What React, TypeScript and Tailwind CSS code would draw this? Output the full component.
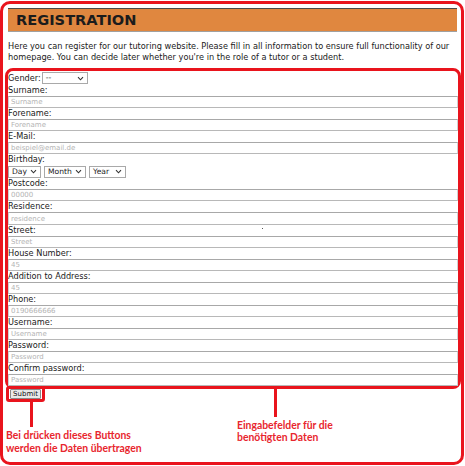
import React from "react";

function Chev() {
  return (
    <svg width="7" height="5" viewBox="0 0 7 5" className="shrink-0">
      <path d="M1 1.2 L3.5 3.8 L6 1.2" fill="none" stroke="#333" strokeWidth="1.1" />
    </svg>
  );
}

function Sel({ label, cls }: { label: string; cls: string }) {
  return (
    <div
      className={`flex items-center justify-between h-[12px] border border-[#a9a9a9] bg-white pl-[3px] pr-[3px] text-[7.6px] leading-none text-[#222] ${cls}`}
    >
      <span>{label}</span>
      <Chev />
    </div>
  );
}

function Field({ label, ph }: { label: string; ph: string }) {
  return (
    <div className="flex flex-col">
      <div className="h-[11px] leading-[11px] text-[8.2px] text-[#1a1a1a]">{label}</div>
      <input
        placeholder={ph}
        className="block w-full h-[12.1px] border-t border-b border-l border-r border-t-[#a8a8a8] border-b-[#b8b8b8] border-l-[#d0d0d0] border-r-[#d0d0d0] bg-white px-[2px] text-[7px] leading-none outline-none placeholder:text-[#b4b4b4] font-['DejaVu_Sans',sans-serif]"
      />
    </div>
  );
}

const before: [string, string][] = [
  ["Surname:", "Surname"],
  ["Forename:", "Forename"],
  ["E-Mail:", "beispiel@email.de"],
];

const after: [string, string][] = [
  ["Postcode:", "00000"],
  ["Residence:", "residence"],
  ["Street:", "Street"],
  ["House Number:", "45"],
  ["Addition to Address:", "45"],
  ["Phone:", "0190666666"],
  ["Username:", "Username"],
  ["Password:", "Password"],
  ["Confirm password:", "Password"],
];

export default function App() {
  return (
    <div className="w-[465px] h-[466px] bg-white overflow-hidden font-['DejaVu_Sans',Verdana,sans-serif]">
      <div className="mt-[1px] w-[464px] h-[464px] border-[3px] border-[#e9141d] rounded-[10px] relative">
        {/* header */}
        <div className="mt-[4px] ml-[5px] mr-[4px] h-[24px] border-t border-t-[#4a4a4a] border-b border-b-[#a0a0a0] bg-[#e0873f] flex items-center pl-[8px]">
          <span className="text-[14.6px] font-bold text-[#1c1c1c] leading-none">REGISTRATION</span>
        </div>
        {/* paragraph */}
        <p className="mt-[9px] ml-[5px] mr-[3px] text-[8.2px] leading-[10.7px] text-[#1a1a1a]">
          Here you can register for our tutoring website. Please fill in all information to ensure full functionality of our homepage. You can decide later whether you're in the role of a tutor or a student.
        </p>
        {/* form box */}
        <div className="mt-[6px] ml-[2px] border-[3px] border-[#e9141d] rounded-[8px] flex flex-col">
          <div className="h-[13.5px] flex items-center">
            <span className="text-[8.2px] text-[#1a1a1a] mr-[1px]">Gender:</span>
            <Sel label="--" cls="w-[46px]" />
          </div>
          {before.map(([l, p]) => (
            <Field key={l} label={l} ph={p} />
          ))}
          <div className="h-[11px] leading-[11px] text-[8.2px] text-[#1a1a1a]">Birthday:</div>
          <div className="h-[13.2px] flex items-center gap-[3px]">
            <Sel label="Day" cls="w-[33px]" />
            <Sel label="Month" cls="w-[42px]" />
            <Sel label="Year" cls="w-[37px]" />
          </div>
          {after.map(([l, p], i) => (
            <Field key={l + i} label={l} ph={p} />
          ))}
        </div>
        {/* annotations */}
        <div className="flex items-start">
          <div className="ml-[3px] w-[231px] flex flex-col">
            <div className="-mt-[3px] w-[39px] h-[16px] border-[3px] border-[#e9141d] rounded-[3px] flex items-center justify-center">
              <div className="w-[31px] h-[10px] bg-[#e9e9e9] border border-[#8a8a8a] rounded-[1px] flex items-center justify-center text-[7px] leading-none text-[#111]">
                Submit
              </div>
            </div>
            <div className="ml-[24px] w-[3px] h-[25px] bg-[#e9141d]" />
            <div className="mt-[2px] font-['Lato',sans-serif] font-bold text-[10.4px] leading-[12.6px] text-[#e8262e]">
              Bei drücken dieses Buttons
              <br />
              werden die Daten übertragen
            </div>
          </div>
          <div className="flex flex-col">
            <div className="ml-[37px] w-[3px] h-[28px] bg-[#e9141d]" />
            <div className="mt-[3px] font-['Lato',sans-serif] font-bold text-[10.4px] leading-[11.7px] text-[#e8262e]">
              Eingabefelder für die
              <br />
              benötigten Daten
            </div>
          </div>
        </div>
        <span className="absolute left-[259px] top-[224px] w-[1px] h-[1px] bg-[#555]" />
      </div>
    </div>
  );
}
